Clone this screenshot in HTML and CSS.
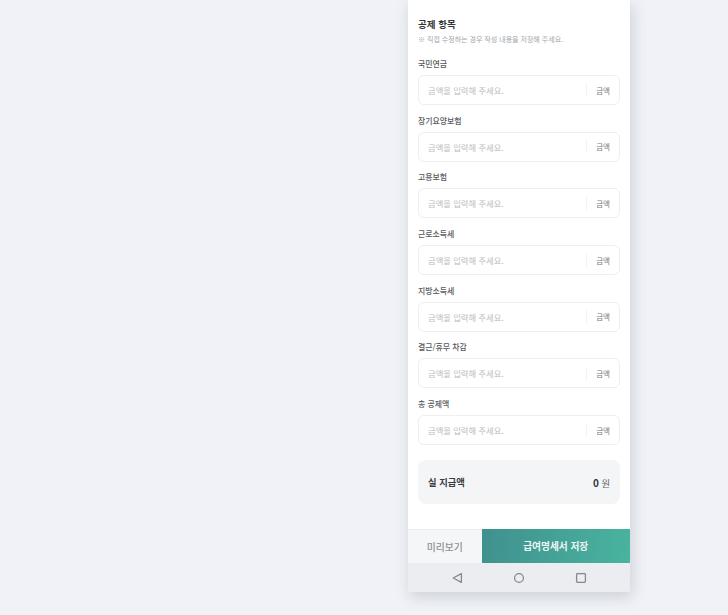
FILE: index.html
```html
<!DOCTYPE html>
<html lang="ko">
<head>
<meta charset="utf-8">
<title>공제 항목</title>
<link rel="stylesheet" href="styles.css">
</head>
<body>
<main class="phone">
  <section class="content">
    <h1 class="title">공제 항목</h1>
    <p class="note">※ 직접 수정하는 경우 작성 내용을 저장해 주세요.</p>
    <div class="fields">
      <div class="field"><div class="label">국민연금</div><div class="input"><span class="ph">금액을 입력해 주세요.</span><span class="unit">금액</span></div></div>
      <div class="field"><div class="label">장기요양보험</div><div class="input"><span class="ph">금액을 입력해 주세요.</span><span class="unit">금액</span></div></div>
      <div class="field"><div class="label">고용보험</div><div class="input"><span class="ph">금액을 입력해 주세요.</span><span class="unit">금액</span></div></div>
      <div class="field"><div class="label">근로소득세</div><div class="input"><span class="ph">금액을 입력해 주세요.</span><span class="unit">금액</span></div></div>
      <div class="field"><div class="label">지방소득세</div><div class="input"><span class="ph">금액을 입력해 주세요.</span><span class="unit">금액</span></div></div>
      <div class="field"><div class="label">결근/휴무 차감</div><div class="input"><span class="ph">금액을 입력해 주세요.</span><span class="unit">금액</span></div></div>
      <div class="field"><div class="label">총 공제액</div><div class="input"><span class="ph">금액을 입력해 주세요.</span><span class="unit">금액</span></div></div>
    </div>
    <div class="total"><span class="total-label">실 지급액</span><span class="total-value"><b>0</b> 원</span></div>
  </section>
  <div class="actions">
    <div class="preview">미리보기</div>
    <div class="save">급여명세서 저장</div>
  </div>
  <nav class="sysnav">
    <svg class="navicon" viewBox="0 0 12 12" width="12" height="12"><path d="M10.4 1.6v8.8L2.2 6z" fill="none" stroke="#85898e" stroke-width="1.3" stroke-linejoin="round"/></svg>
    <svg class="navicon" viewBox="0 0 12 12" width="12" height="12"><circle cx="6" cy="6" r="4.4" fill="none" stroke="#85898e" stroke-width="1.3"/></svg>
    <svg class="navicon" viewBox="0 0 12 12" width="12" height="12"><rect x="1.6" y="1.6" width="8.8" height="8.8" rx="0.8" fill="none" stroke="#85898e" stroke-width="1.3"/></svg>
  </nav>
</main>
</body>
</html>
```
FILE: styles.css
```css
* { box-sizing: border-box; }
html, body { margin: 0; height: 100%; }
body {
  background: #f0f2f7;
  padding-left: 408px;
  font-family: "Noto Sans CJK KR", "Noto Sans", sans-serif;
  overflow: hidden;
}
.phone {
  width: 222px;
  height: 592px;
  background: #fff;
  display: flex;
  flex-direction: column;
  box-shadow: 2px 5px 14px rgba(60, 70, 90, 0.2);
}
.content {
  flex: 1;
  padding: 16px 10px 0;
}
.title {
  margin: 0;
  font-size: 9.5px;
  line-height: 16px;
  font-weight: 700;
  color: #33353a;
}
.note {
  margin: 1px 0 0;
  font-size: 7px;
  line-height: 12px;
  color: #a3a6ab;
}
.fields {
  margin-top: 13px;
  display: flex;
  flex-direction: column;
  gap: 9.7px;
}
.label {
  font-size: 7.9px;
  line-height: 12px;
  font-weight: 500;
  color: #56595e;
  margin-bottom: 5px;
}
.input {
  height: 30px;
  border: 1px solid #edeff2;
  border-radius: 6px;
  display: flex;
  align-items: center;
  justify-content: space-between;
  padding: 0 9px;
  background: #fff;
}
.ph {
  font-size: 8.3px;
  color: #b9bcc0;
}
.unit {
  font-size: 7.5px;
  color: #74777c;
  border-left: 1px solid #f0f2f4;
  padding-left: 9.5px;
  line-height: 13px;
}
.total {
  margin-top: 15px;
  height: 44px;
  background: #f4f5f7;
  border-radius: 8px;
  display: flex;
  align-items: center;
  justify-content: space-between;
  padding: 0 10px;
}
.total-label {
  font-size: 9.3px;
  font-weight: 700;
  color: #3b3d41;
}
.total-value {
  font-size: 9.3px;
  color: #5d6065;
}
.total-value b { color: #36383c; font-size: 10px; }
.actions {
  display: flex;
  height: 34px;
}
.preview {
  width: 73.5px;
  display: flex;
  align-items: center;
  justify-content: center;
  background: #f5f6f8;
  border-top: 1px solid #eceef0;
  font-size: 9.8px;
  font-weight: 500;
  color: #8e9196;
}
.save {
  flex: 1;
  display: flex;
  align-items: center;
  justify-content: center;
  background: linear-gradient(100deg, #40908e, #49b49f);
  font-size: 9.7px;
  font-weight: 700;
  color: #eef6f3;
}
.sysnav {
  height: 29px;
  background: #ecedf1;
  display: flex;
  align-items: center;
  justify-content: space-between;
  padding: 0 43px;
}
```
